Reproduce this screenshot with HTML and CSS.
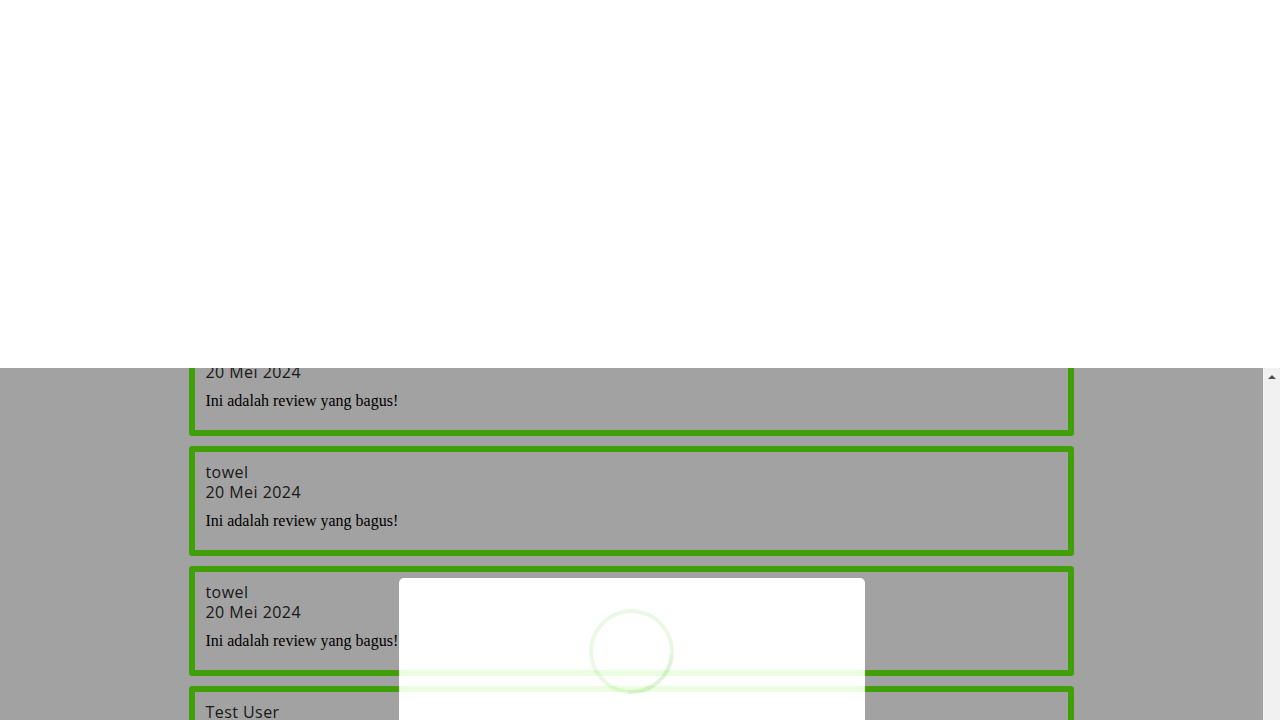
FILE: index.html
```html
<!DOCTYPE html>
<html lang="id">
<head>
<meta charset="utf-8">
<title>Review</title>
<link rel="stylesheet" href="styles.css">
</head>
<body>
<div class="page">
  <header class="top"></header>
  <div class="pane">
    <main class="reviews" id="reviews">
      <div class="list" id="list"></div>
      <div class="modal" id="modal">
        <div class="spinner"></div>
      </div>
    </main>
    <div class="scrollbar" aria-hidden="true">
      <span class="arrow-up"></span>
    </div>
  </div>
</div>
<script src="script.js"></script>
</body>
</html>
```

FILE: styles.css
```css
html, body {
  margin: 0;
  height: 100%;
  overflow: hidden;
  background: #fff;
}

.page {
  display: flex;
  flex-direction: column;
}

.top {
  height: 368px;
  flex: none;
  background: #fff;
}

.pane {
  display: flex;
  height: 720px;
  flex: none;
}

.reviews {
  flex: 1;
  min-width: 0;
  overflow: hidden;
  position: relative;
  background: #fff;
}

.scrollbar {
  width: 17px;
  flex: none;
  background: #f1f1f1;
  display: flex;
  justify-content: center;
  align-items: flex-start;
  padding-top: 7px;
  box-sizing: border-box;
}

.arrow-up {
  width: 0;
  height: 0;
  border-left: 4px solid transparent;
  border-right: 4px solid transparent;
  border-bottom: 4px solid #505050;
}

.list {
  display: flex;
  flex-direction: column;
  align-items: center;
  gap: 10px;
  padding: 10px 0;
}

.card {
  width: 70%;
  box-sizing: border-box;
  border: 6px solid #66fa10;
  border-radius: 3px;
  padding: 10px;
}

.name,
.date {
  font-family: "Open Sans", "Noto Sans", sans-serif;
  font-size: 16px;
  line-height: 20px;
  letter-spacing: 0.45px;
  color: #2a2a2a;
}

.text {
  margin: 10px 0;
  font-family: "Liberation Serif", serif;
  font-size: 16px;
  line-height: 18px;
  color: #000;
}

.modal {
  position: absolute;
  left: 50%;
  transform: translateX(-50%);
  width: 466px;
  height: 400px;
  box-sizing: border-box;
  padding-top: 31px;
  background: #fff;
  border-radius: 5px;
  box-shadow: 0 0 0 9999px rgba(0, 0, 0, 0.41);
  opacity: 0.88;
  display: flex;
  justify-content: center;
  align-items: flex-start;
}

.spinner {
  width: 85px;
  height: 85px;
  box-sizing: border-box;
  border: 4px solid #e9f8e2;
  border-bottom-color: #dcf1d2;
  border-radius: 50%;
  transform: rotate(-40deg);
}
```

FILE: script.js
```js
(function () {
  var list = document.getElementById('list');
  var reviews = document.getElementById('reviews');
  var modal = document.getElementById('modal');
  var data = [];
  for (var i = 0; i < 24; i++) {
    var name = 'towel';
    if (i === 12 || i === 15 || i === 19) name = 'Test User';
    data.push({ name: name, date: '20 Mei 2024', text: 'Ini adalah review yang bagus!' });
  }
  data.forEach(function (d) {
    var card = document.createElement('div');
    card.className = 'card';
    var n = document.createElement('div');
    n.className = 'name';
    n.textContent = d.name;
    var dt = document.createElement('div');
    dt.className = 'date';
    dt.textContent = d.date;
    var p = document.createElement('p');
    p.className = 'text';
    p.textContent = d.text;
    card.appendChild(n);
    card.appendChild(dt);
    card.appendChild(p);
    list.appendChild(card);
  });
  var cards = list.querySelectorAll('.card');
  reviews.scrollTop = cards[9].offsetTop + 42;
  modal.style.top = (reviews.scrollTop + 210) + 'px';
})();
```
